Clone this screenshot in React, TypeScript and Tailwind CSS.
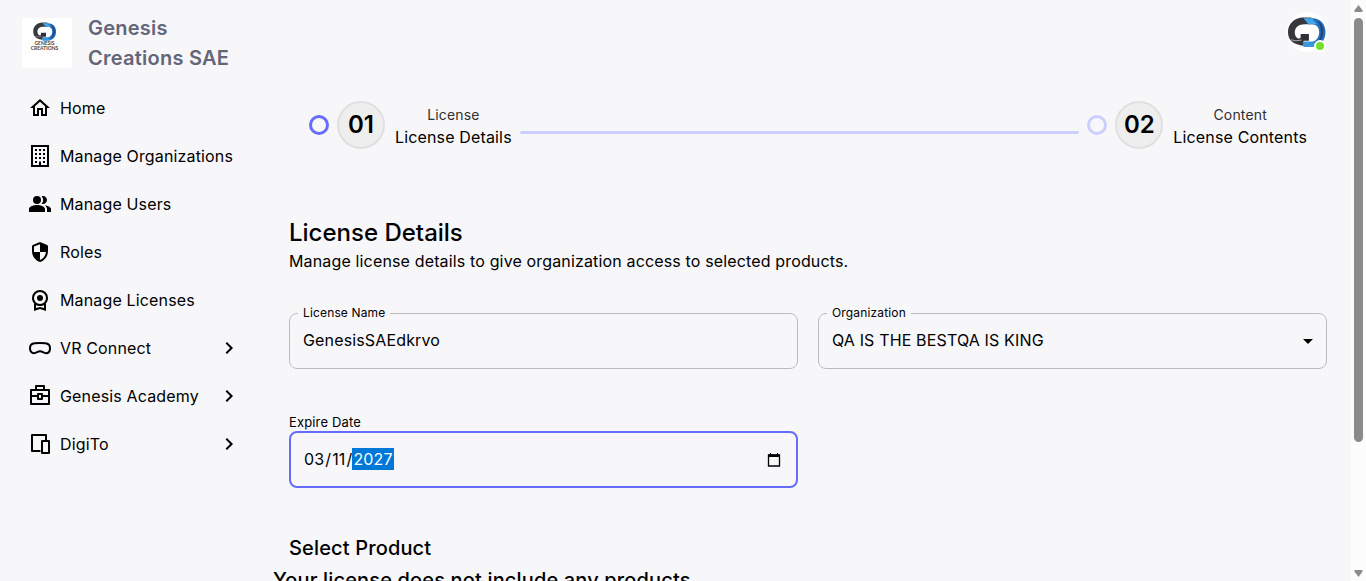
import type { ReactNode } from 'react'
import { MdPeopleAlt, MdChevronRight, MdArrowDropDown } from 'react-icons/md'

function Icon({ d }: { d: string }) {
  return (
    <svg viewBox="0 0 24 24" className="size-6 shrink-0" fill="currentColor" fillRule="evenodd">
      <path d={d} />
    </svg>
  )
}

const nav: { label: string; icon: ReactNode; more?: boolean }[] = [
  { label: 'Home', icon: <Icon d="M12 5.69L17 10.19V18H15V12H9V18H7V10.19L12 5.69M12 3L2 12H5V20H11V14H13V20H19V12H22" /> },
  {
    label: 'Manage Organizations',
    icon: (
      <Icon d="M19 3V21H13V17.5H11V21H5V3H19M15 7H17V5H15V7M11 7H13V5H11V7M7 7H9V5H7V7M15 11H17V9H15V11M11 11H13V9H11V11M7 11H9V9H7V11M15 15H17V13H15V15M11 15H13V13H11V15M7 15H9V13H7V15M15 19H17V17H15V19M7 19H9V17H7V19M21 1H3V23H21V1Z" />
    ),
  },
  { label: 'Manage Users', icon: <MdPeopleAlt className="size-6 shrink-0" /> },
  {
    label: 'Roles',
    icon: (
      <Icon d="M12 22q-3.475-.875-5.738-3.988T4 11.1V6.4Q4 5.4 4.9 5L11.3 2.3Q12 2 12.7 2.3L19.1 5Q20 5.4 20 6.4V11.1q0 3.8-2.262 6.913T12 22m0-2.1q2.425-.75 4.05-2.963T17.95 12H12V4.125l-6 2.25v5.175q0 .175.05.45H12z" />
    ),
  },
  {
    label: 'Manage Licenses',
    icon: (
      <Icon d="M9 10a3 3 0 1 0 6 0a3 3 0 1 0-6 0M6 23v-7.725q-.95-1.05-1.475-2.4T4 10q0-3.35 2.325-5.675T12 2t5.675 2.325T20 10q0 1.525-.525 2.875T18 15.275V23l-6-2zm10.25-8.75Q18 12.5 18 10t-1.75-4.25T12 4 7.75 5.75 6 10t1.75 4.25T12 16t4.25-1.75M8 20.025L12 19l4 1.025v-3.1q-.875.5-1.862.787T12 18t-2.137-.288T8 16.926z" />
    ),
  },
  {
    label: 'VR Connect',
    more: true,
    icon: (
      <svg viewBox="0 0 24 24" className="size-6 shrink-0" fill="none" stroke="currentColor" strokeWidth="2">
        <path d="M6.500 7.300Q12 6.700 17.500 7.300C20.400 7.600 22 9.500 22 12.200C22 15.200 20.300 17.200 18 17.200C15.500 17.200 14.300 15.300 12 15.300C9.700 15.300 8.500 17.200 6 17.200C3.700 17.200 2 15.200 2 12.200C2 9.500 3.600 7.600 6.500 7.300Z" />
      </svg>
    ),
  },
  {
    label: 'Genesis Academy',
    more: true,
    icon: (
      <svg viewBox="0 0 24 24" className="size-6 shrink-0" fill="none" stroke="currentColor" strokeWidth="2" strokeLinejoin="round">
        <path d="M3 6H21V20H3ZM8 6V2H16V6M3 12H10M14 12H21M10 10H14V15H10Z" />
      </svg>
    ),
  },
  {
    label: 'DigiTo',
    more: true,
    icon: (
      <svg viewBox="0 0 24 24" className="size-6 shrink-0" fill="none" stroke="currentColor" strokeWidth="2" strokeLinejoin="round">
        <path d="M12.500 19H4V3H18V8.500M14 9H21V21H14Z" />
      </svg>
    ),
  },
]

function LogoMark({ className }: { className: string }) {
  return (
    <svg viewBox="0 0 40 32" className={className}>
      <path d="M25 1H17C7 1 1 8 1 16C1 25 7 29 17 30V24.500C11 24 8 21 8 16.500C8 11 12 8 18 8H24Z" fill="#37383c" />
      <path d="M17 2H26C35 2 39.500 9 39.500 16C39.500 25 34 31 26 31H17V26H25C30 26 33 21 33 16C33 11 30 8 25 8H22Z" fill="#256fbd" />
      <path d="M17 2H25L31 8H22Z" fill="#42a5e8" />
      <path d="M17 26H27L30 31H17Z" fill="#3799dd" />
      <path d="M31 4C40 9 39 23 31 28C36 21 36 11 31 4Z" fill="#244477" />
      <path d="M5 23.500Q11 24 14 22V18H22.500V25H17C13 27.500 8 27 5 23.500Z" fill="#303136" />
      <path d="M4 24Q9 26 15 24.200" stroke="#c7cace" strokeWidth=".8" fill="none" />
    </svg>
  )
}

function Step({ number, title, subtitle, active }: { number: string; title: string; subtitle: string; active?: boolean }) {
  return (
    <div className="flex shrink-0 items-center">
      <span className={`size-5 rounded-full border-3 ${active ? 'border-[#666cff]' : 'border-[#ccceff]'}`} />
      <span className="ml-2 flex size-12 items-center justify-center rounded-full border-2 border-[#e0e0e0] bg-[#eeeeee] text-2xl font-semibold">
        {number}
      </span>
      <div className="ml-2.5 flex flex-col items-center pt-0.5">
        <span className="text-sm leading-[21px] tracking-[0.15px] text-[#303030]">{title}</span>
        <span className="text-base leading-6 tracking-[0.15px]">{subtitle}</span>
      </div>
    </div>
  )
}

function OutlinedField({ label, value, select }: { label: string; value: string; select?: boolean }) {
  return (
    <fieldset className="h-16 min-w-0 flex-1 rounded-lg border border-[#bdbdbf] pr-[9px] pl-2">
      <legend className="h-4 pr-[5px] pl-[5px] text-xs leading-4 tracking-[0.15px]">{label}</legend>
      <div className="flex h-10 items-center justify-between pl-[5px]">
        <span className="pb-0.5 text-base leading-6 tracking-[0.15px]">{value}</span>
        {select && <MdArrowDropDown className="-mr-[3px] size-6" />}
      </div>
    </fieldset>
  )
}

export default function App() {
  return (
    <div className="flex h-[581px] w-full overflow-hidden bg-[#f7f7f9] font-['Inter',sans-serif] text-black">
      <aside className="w-[260px] shrink-0">
        <header className="flex h-[84px] gap-4 pt-[13px] pl-[22px]">
          <div className="mt-[5px] flex size-[50px] shrink-0 flex-col items-center bg-white pt-1 pr-[5px]">
            <LogoMark className="h-[19px] w-[25px]" />
            <div className="flex flex-col items-center font-['Lato',sans-serif] text-[5px] leading-[5px] font-bold text-[#444]">
              <span>GENESIS</span>
              <span>CREATIONS</span>
            </div>
          </div>
          <h1 className="w-[155px] text-xl leading-[30px] font-semibold tracking-[0.25px] text-[#636578]">Genesis Creations SAE</h1>
        </header>
        <nav>
          {nav.map((item) => (
            <a key={item.label} className="flex h-12 items-center pr-[19px] pl-7">
              {item.icon}
              <span className="ml-2 flex-1 text-base leading-6 tracking-[0.15px]">{item.label}</span>
              {item.more && <MdChevronRight className="size-6" />}
            </a>
          ))}
        </nav>
      </aside>

      <main className="min-w-0 flex-1 pr-6 pl-[29px]">
        <div className="flex h-[101px] justify-end pt-3">
          <div className="relative flex size-10 items-center justify-center rounded-full bg-white">
            <LogoMark className="mr-px h-8 w-[39px] shrink-0" />
            <span className="absolute right-px bottom-0 size-3 rounded-full border-2 border-white bg-[#72e128]" />
          </div>
        </div>
        <div className="flex h-12 items-center px-5">
          <Step number="01" title="License" subtitle="License Details" active />
          <span className="mx-2 mt-[15px] h-[3px] flex-1 rounded-full bg-[#cccfff]" />
          <Step number="02" title="Content" subtitle="License Contents" />
        </div>

        <h2 className="mt-[68px] text-2xl leading-8 font-medium">License Details</h2>
        <p className="text-base leading-6 tracking-[0.15px]">Manage license details to give organization access to selected products.</p>
        <div className="mt-8 flex gap-5">
          <OutlinedField label="License Name" value="GenesisSAEdkrvo" />
          <OutlinedField label="Organization" value="QA IS THE BESTQA IS KING" select />
        </div>

        <div className="mt-[45px] w-[509px]">
          <label className="block h-[17px] text-[13px] leading-[17px] tracking-[0.15px]">Expire Date</label>
          <div className="flex h-[57px] items-center justify-between rounded-lg border-2 border-[#666cff] pr-3.5 pl-3">
            <div className="flex items-center pb-0.5 text-base leading-[22px] tracking-[0.15px]">
              <span className="px-px">03</span>/<span className="px-px">11</span>/
              <span className="bg-[#0078d7] px-px text-white">2027</span>
            </div>
            <svg viewBox="0 0 16 16" className="size-4" fill="none">
              <path d="M2.500 3H13.500V14H2.500Z" stroke="black" strokeWidth="1.300" />
              <path d="M2 2.500H14V5H2ZM4 1H5V3H4ZM11 1H12V3H11Z" fill="black" />
            </svg>
          </div>
        </div>
        <h3 className="mt-11 text-xl leading-8 font-medium tracking-[0.15px]">Select Product</h3>
        <p className="-ml-4 text-xl leading-8 font-medium tracking-[0.15px]">Your license does not include any products.</p>
      </main>

      <div className="flex w-[15px] shrink-0 flex-col items-center bg-[#fcfcfc] text-[#8b8b8b]">
        <svg viewBox="0 0 9 8" className="mt-[5px] h-[7px] w-[9px] shrink-0" fill="currentColor">
          <path d="M4.500 0L9 6V8H0V6Z" />
        </svg>
        <div className="mt-1.5 h-[424px] w-[9px] shrink-0 rounded-full bg-[#8b8b8b]" />
        <svg viewBox="0 0 9 8" className="mt-auto mb-1 h-[7px] w-[9px] shrink-0" fill="currentColor">
          <path d="M0 0H9V2L4.500 8L0 2Z" />
        </svg>
      </div>
    </div>
  )
}
